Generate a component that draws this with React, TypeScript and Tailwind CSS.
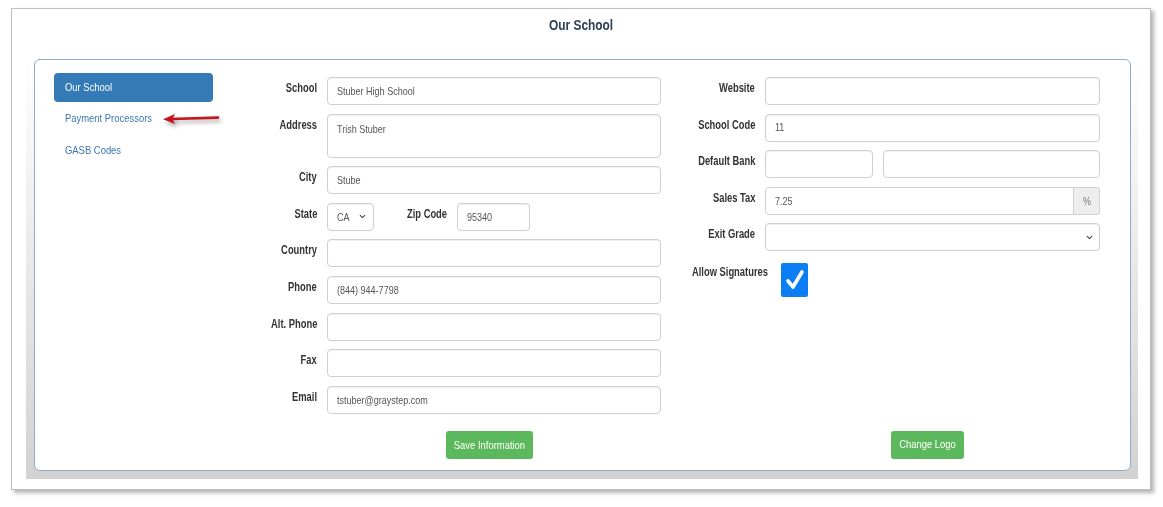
import { ChevronDown } from "lucide-react";

// the reference text is horizontally compressed (narrow Arial look)
const narrow = "inline-block scale-x-[0.82] whitespace-nowrap";
const narrowBold = "inline-block scale-x-[0.78] whitespace-nowrap";

const inputCls =
  "h-[28px] rounded-[4px] border border-[#cfcfcf] bg-white px-[9px] text-[11px] text-[#555] shadow-[inset_0_1px_1px_rgba(0,0,0,0.06)]";

function Label({ text, width = "w-[77px]" }: { text: string; width?: string }) {
  return (
    <div className={`${width} shrink-0 pt-[4px] text-right text-[12px] leading-[14px] font-bold text-[#333]`}>
      <span className={`${narrowBold} origin-right`}>{text}</span>
    </div>
  );
}

function Value({ text }: { text?: string }) {
  if (!text) return null;
  return <span className={`${narrow} origin-left`}>{text}</span>;
}

function Field({ label, value, className = "", labelWidth }: { label: string; value?: string; className?: string; labelWidth?: string }) {
  return (
    <div className="flex gap-[10px]">
      <Label text={label} width={labelWidth} />
      <div className={`${inputCls} flex flex-1 items-center ${className}`}>
        <Value text={value} />
      </div>
    </div>
  );
}

function RedArrow() {
  return (
    <svg
      width="60"
      height="16"
      viewBox="0 0 60 16"
      className="absolute top-[9px] left-[108px] drop-shadow-[2px_3px_2px_rgba(0,0,0,0.35)]"
    >
      <line x1="9" y1="8" x2="56" y2="6.6" stroke="#c4161c" strokeWidth="2.6" strokeLinecap="round" />
      <polygon points="1,8.3 13,3 10.5,8.1 13,13" fill="#c4161c" />
    </svg>
  );
}

export default function App() {
  return (
    <div className="min-h-[507px] bg-white pt-[8px] font-['Liberation_Sans',Arial,sans-serif]">
      <div className="ml-[11px] flex h-[482px] w-[1140px] flex-col border border-[#bdbdbd] bg-white shadow-[3px_3px_4px_rgba(0,0,0,0.3)]">
        <div className="mt-[8px] h-[16px] text-center text-[14.5px] leading-[16px] font-bold text-[#2c3e50]">
          <span className={`${narrow} origin-center`}>Our School</span>
        </div>

        <div className="mt-[26px] mb-[11px] ml-[14px] w-[1112px] bg-gradient-to-b from-white to-[#d2d2d2] pr-[7px] pb-[8px] pl-[8px]">
          <div className="flex h-[412px] rounded-[6px] border border-[#93aac8] bg-white pt-[13px] pr-[30px] pb-[11px] pl-[19px]">
            {/* side nav */}
            <nav className="flex w-[159px] shrink-0 flex-col text-[11.5px]">
              <div className="flex h-[29px] items-center rounded-[4px] bg-[#337ab7] px-[11px] text-white">
                <span className={`${narrow} origin-left`}>Our School</span>
              </div>
              <div className="relative flex h-[34px] items-center px-[11px] text-[#3b78b4]">
                <span className={`${narrow} origin-left`}>Payment Processors</span>
                <RedArrow />
              </div>
              <div className="flex h-[30px] items-center px-[11px] text-[#3b78b4]">
                <span className={`${narrow} origin-left`}>GASB Codes</span>
              </div>
            </nav>

            {/* left form */}
            <div className="mt-[4px] ml-[27px] flex w-[421px] shrink-0 flex-col gap-[8.6px]">
              <Field label="School" value="Stuber High School" className="bg-[#eeeeee]" />
              <div className="flex gap-[10px]">
                <Label text="Address" />
                <div className={`${inputCls} h-[44px] flex-1 pt-[6px]`}>
                  <Value text="Trish Stuber" />
                </div>
              </div>
              <Field label="City" value="Stube" />
              <div className="flex">
                <Label text="State" />
                <div className={`${inputCls} ml-[10px] flex w-[47px] items-center justify-between pr-[6px]`}>
                  <Value text="CA" />
                  <ChevronDown size={9} strokeWidth={3} className="text-[#444]" />
                </div>
                <div className="ml-[33px] w-[40px] pt-[4px] text-[12px] leading-[14px] font-bold text-[#333]">
                  <span className={`${narrowBold} origin-left`}>Zip Code</span>
                </div>
                <div className={`${inputCls} ml-[10px] flex w-[73px] items-center`}>
                  <Value text="95340" />
                </div>
              </div>
              <Field label="Country" />
              <Field label="Phone" value="(844) 944-7798" />
              <Field label="Alt. Phone" />
              <Field label="Fax" />
              <Field label="Email" value="tstuber@graystep.com" />
              <div className="mt-[9px] pl-[206px]">
                <button className="h-[28px] w-[87px] rounded-[3px] bg-[#5cb85c] text-[11.5px] text-white">
                  <span className={`${narrow} origin-center`}>Save Information</span>
                </button>
              </div>
            </div>

            {/* right form */}
            <div className="mt-[4px] ml-[19px] flex w-[420px] shrink-0 flex-col gap-[8.6px]">
              <Field label="Website" labelWidth="w-[75px]" />
              <Field label="School Code" value="11" labelWidth="w-[75px]" />
              <div className="flex gap-[10px]">
                <Label text="Default Bank" width="w-[75px]" />
                <div className={`${inputCls} w-[108px] shrink-0`} />
                <div className={`${inputCls} flex-1`} />
              </div>
              <div className="flex gap-[10px]">
                <Label text="Sales Tax" width="w-[75px]" />
                <div className="flex h-[28px] flex-1">
                  <div className="flex flex-1 items-center rounded-l-[4px] border border-[#cfcfcf] px-[9px] text-[11px] text-[#555]">
                    <Value text="7.25" />
                  </div>
                  <div className="flex w-[26px] items-center justify-center rounded-r-[4px] border border-l-0 border-[#cfcfcf] bg-[#eeeeee] text-[11px] text-[#777]">
                    <span className={`${narrow} origin-center`}>%</span>
                  </div>
                </div>
              </div>
              <div className="flex gap-[10px]">
                <Label text="Exit Grade" width="w-[75px]" />
                <div className={`${inputCls} flex flex-1 items-center justify-end pr-[5px]`}>
                  <ChevronDown size={9} strokeWidth={3} className="text-[#444]" />
                </div>
              </div>
              <div className="mt-[3px] flex items-start">
                <div className="ml-[12px] w-[89px] shrink-0 pt-[2px] text-[12px] leading-[14px] font-bold text-[#333]">
                  <span className={`${narrowBold} origin-left`}>Allow Signatures</span>
                </div>
                <div className="flex h-[34px] w-[27px] items-center justify-center rounded-[2px] bg-[#0b7ef5]">
                  <svg width="20" height="24" viewBox="0 0 20 24">
                    <path d="M3 13 L8 19 L17 4" fill="none" stroke="white" strokeWidth="3.6" strokeLinecap="round" strokeLinejoin="round" />
                  </svg>
                </div>
              </div>
              <div className="mt-auto pl-[211px]">
                <button className="h-[28px] w-[73px] rounded-[3px] bg-[#5cb85c] text-[11.5px] text-white">
                  <span className={`${narrow} origin-center`}>Change Logo</span>
                </button>
              </div>
            </div>
          </div>
        </div>
      </div>
    </div>
  );
}
